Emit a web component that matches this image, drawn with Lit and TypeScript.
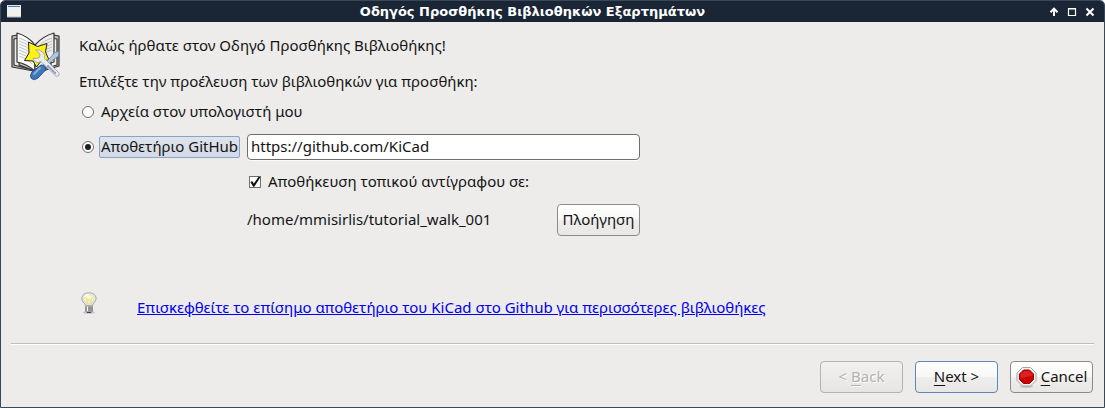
import { LitElement, html, css } from "lit";
import { customElement, state } from "lit/decorators.js";

@customElement("app-root")
export class AppRoot extends LitElement {
  static styles = css`
    :host {
      display: block;
      height: 100vh;
      font: 15px/20px "Noto Sans", "Open Sans", sans-serif;
      color: #141414;
      background: #fff;
    }
    * { box-sizing: border-box; }
    .window {
      display: flex;
      flex-direction: column;
      min-height: 100%;
      border: 1px solid #3b4858;
      border-radius: 5px 5px 0 0;
      background: #edeceb;
      overflow: hidden;
    }
    .titlebar {
      display: grid;
      grid-template-columns: 20px 1fr 60px;
      align-items: center;
      height: 21px;
      padding: 0 6px;
      background: #1a2636;
      color: #fff;
    }
    .titlebar h1 {
      margin: 0;
      font: bold 13px/20px "DejaVu Sans", sans-serif;
      text-align: center;
      white-space: nowrap;
    }
    .titlebar svg { display: block; }
    .controls { display: flex; justify-content: flex-end; gap: 4px; }
    .controls button {
      padding: 0;
      border: 0;
      background: none;
      width: 14px;
      height: 14px;
      color: #fff;
    }
    .page {
      flex: 1;
      display: flex;
      gap: 18px;
      padding: 9px 10px 0;
    }
    .art { flex: none; display: block; }
    .content { flex: 1; min-width: 0; padding-top: 4px; }
    .content p { margin: 0 0 16px; }
    .grid {
      display: grid;
      grid-template-columns: 157px minmax(0, 393px);
      column-gap: 11px;
      margin-top: -5px;
    }
    .row { display: flex; align-items: center; }
    .span { grid-column: 1 / -1; height: 20px; margin-bottom: 12px; }
    .second { grid-column: 2; }
    input[type="radio"], input[type="checkbox"] {
      appearance: none;
      flex: none;
      display: grid;
      place-content: center;
      width: 12px;
      height: 12px;
      background: #fff;
      border: 1px solid #6e6e6b;
    }
    input[type="radio"] { margin: 0 5px 0 3px; border-radius: 50%; }
    input[type="radio"]:checked::before {
      content: "";
      width: 6px;
      height: 6px;
      border-radius: 50%;
      background: #1c2023;
    }
    input[type="checkbox"] { margin: 0 5px 0 2px; }
    input[type="checkbox"]:checked::before {
      content: "";
      width: 12px;
      height: 12px;
      background: #141414;
      clip-path: polygon(12% 50%, 26% 42%, 40% 62%, 82% 4%, 94% 12%, 44% 90%, 34% 90%);
    }
    label {
      padding: 0 1px 2px;
      border: 1px solid transparent;
      border-radius: 2px;
      line-height: 18px;
      white-space: nowrap;
    }
    label.focused { border-color: #86a3c8; background: linear-gradient(#dfe3ea, #d3dae6); }
    .url {
      width: 100%;
      height: 26px;
      padding: 0 3px 2px;
      font: inherit;
      color: inherit;
      background: #fff;
      border: 1px solid #6e6e6b;
      border-radius: 4px;
      box-shadow: 0 1px 0 #fafafa;
      outline: none;
    }
    .copy { height: 22px; margin-top: 11px; }
    .path { justify-content: space-between; margin-top: 11px; }
    .path span { padding-bottom: 2px; }
    .push {
      display: flex;
      align-items: center;
      justify-content: center;
      gap: 4px;
      width: 83px;
      height: 32px;
      padding: 0 0 2px;
      font: inherit;
      color: inherit;
      white-space: nowrap;
      background: linear-gradient(#fff, #f7f7f6 50%, #efeeed 51%, #e8e7e6);
      border: 1px solid #8b8a87;
      border-radius: 4px;
    }
    .push.default { border-color: #5d87b9; }
    .push:disabled {
      color: #b3b1ae;
      text-shadow: 1px 1px 0 #fff;
      border-color: #b4b2af;
      background: linear-gradient(#f2f1f0, #e6e5e4);
    }
    .push svg { margin-top: 2px; }
    .hint { gap: 40px; margin: 56px 0 0 2px; align-items: flex-start; }
    .hint svg { flex: none; }
    .hint a { color: #0000ee; margin-top: 5px; }
    .key { text-decoration: underline; text-underline-offset: 3px; }
    footer {
      display: flex;
      justify-content: flex-end;
      gap: 12px;
      margin: 0 10px;
      padding: 17px 1px 14px 0;
      border-top: 1px solid #bfbebc;
      box-shadow: inset 0 1px 0 #fff;
    }
  `;

  @state() private source = "github";
  @state() private keepCopy = true;

  private wizardArt() {
    return html`<svg class="art" width="50" height="50" viewBox="0 0 50 50" aria-hidden="true">
      <g stroke="#343434" stroke-width="1.2" stroke-linejoin="round">
        <path d="M1 5 L6 4 L24 15 L43 4 L48 5 V35 L28 41 L1 36Z" fill="#b8b8b8"/>
        <path d="M3 8 L8 7 V34 L24 40 L40 34 V7 L46 8 V34 L25 40 L3 34Z" fill="#eee"/>
        <path d="M6 2 Q17 5 24 14 V40 Q16 33 6 31Z" fill="#fafafa"/>
        <path d="M43 2 Q32 5 24 14 V40 Q32 33 43 31Z" fill="#ededed"/>
      </g>
      <g stroke="#b4b4b4" stroke-width=".8" fill="none">
        <path d="M8 7q8 2 13 8M8 10q8 2 13 8M8 13q8 2 13 8M8 16q8 2 13 8M8 19q8 2 13 8M8 22q8 2 13 8M8 25q8 2 13 8M41 7q-8 2 -13 8M41 10q-8 2 -13 8M41 13q-8 2 -13 8M41 16q-8 2 -13 8M41 19q-8 2 -13 8"/>
      </g>
      <path d="M17.500 11 L26.500 15.500 L36 12.500 L34.500 21 L38 29 L30 30 L25.500 36 L22 30 L13.500 29.500 L18 22Z" fill="#fff212" stroke="#222" stroke-width="1" stroke-linejoin="round"/>
      <path d="M43.500 21.500 L48 20.500 L47.500 25 L42 29 L34.500 36 L32.500 34 L39 27Z" fill="#b4c6dd" stroke="#6580a4" stroke-width=".8"/>
      <path d="M22 27 Q22.500 31 26 31.500 Q28 31.800 30 30.500 L43.500 44 Q46 46.500 48 44.500 Q49 42.500 47 41 L33.500 27.500 Q34.500 24 32 21.500 Q29 18 24.500 19 L29 23 L28.500 26.500 L25 27.500Z" fill="#e8ebef" stroke="#9a9da2" stroke-width=".8" stroke-linejoin="round"/>
      <path d="M37 35 L45 43" stroke="#8c96c4" stroke-width="2" stroke-linecap="round" stroke-dasharray="1 2"/>
      <path d="M30 34 Q35 34 34.500 39 L27 47 Q23 50 20.500 47.500 Q18 45 21 41Z" fill="#3f77ba" stroke="#28528d"/>
      <path d="M23 43 L29 37" stroke="#8bb0dc" stroke-width="1.800" stroke-linecap="round"/>
    </svg>`;
  }

  private bulb() {
    return html`<svg width="16" height="23" viewBox="0 0 16 23" aria-hidden="true">
      <ellipse cx="8" cy="20.500" rx="6" ry="1.300" fill="#c5c4c2"/>
      <path d="M4.500 14 Q4.500 12 2 10 Q.5 8 .8 6 Q1.700 .8 8 .7 Q14.300 .8 15.200 6 Q15.400 8 13.500 10 Q11.500 12 11.500 14Z" fill="#e4e4df" stroke="#adada8"/>
      <ellipse cx="8" cy="6.500" rx="4.500" ry="3.200" fill="#fbf8c0"/>
      <path d="M4.500 5 L6 8 H10 L11.500 5 M6 8 V13 M10 8 V13" fill="none" stroke="#e8d96a" stroke-width=".9"/>
      <path d="M3.500 5 Q5 2.500 8 2.500" stroke="#fff" fill="none" stroke-width="1.300"/>
      <rect x="4.500" y="14" width="7" height="6" rx="1" fill="#b7b7b7" stroke="#858585" stroke-width=".8"/>
      <path d="M5 16H11M5 18H11" stroke="#666" stroke-width=".8"/>
      <path d="M6.500 14.500V19" stroke="#fff"/>
      <path d="M6 20.500H10" stroke="#444"/>
    </svg>`;
  }

  private stopSign() {
    return html`<svg width="21" height="21" viewBox="0 0 21 21" aria-hidden="true">
      <ellipse cx="10.500" cy="19.500" rx="7" ry="1.500" fill="#c8c7c5"/>
      <path d="M6.500 .5H14.500L20 6V13.500L14.500 19H6.500L1 13.500V6Z" fill="#f4f4f3" stroke="#a4a4a1"/>
      <path d="M7.500 3H13.500L17.500 7V12.500L13.500 16.500H7.500L3.500 12.500V7Z" fill="#cc0000" stroke="#a80000"/>
      <path d="M8 4H13L16.500 7.500V9L4.500 11V7.500Z" fill="#dd2020"/>
    </svg>`;
  }

  render() {
    return html`<div class="window">
      <header class="titlebar">
        <svg width="14" height="13" viewBox="0 0 14 13" aria-hidden="true">
          <rect width="14" height="12" fill="#f1f1ef"/>
          <path d="M0 .5H14" stroke="#dfe8f2"/><path d="M1 1.500H13" stroke="#4a7fc0"/>
          <path d="M0 12H14" stroke="#b8b8b4"/>
        </svg>
        <h1>Οδηγός Προσθήκης Βιβλιοθηκών Εξαρτημάτων</h1>
        <div class="controls">
          <button aria-label="Shade"><svg width="14" height="14" viewBox="0 0 14 14"><path d="M6 11V5M2.500 7.200L6 3.700L9.500 7.200" fill="none" stroke="currentColor" stroke-width="2"/></svg></button>
          <button aria-label="Maximize"><svg width="14" height="14" viewBox="0 0 14 14"><path d="M2.500 3.500H9.500V10.500H2.500Z M2 4H10" fill="none" stroke="currentColor" stroke-width="1.200"/></svg></button>
          <button aria-label="Close"><svg width="14" height="14" viewBox="0 0 14 14"><path d="M2.500 3.500L9.500 10.500M9.500 3.500L2.500 10.500" stroke="currentColor" stroke-width="2"/></svg></button>
        </div>
      </header>

      <main class="page">
        ${this.wizardArt()}
        <div class="content">
          <p>Καλώς ήρθατε στον Οδηγό Προσθήκης Βιβλιοθήκης!</p>
          <p>Επιλέξτε την προέλευση των βιβλιοθηκών για προσθήκη:</p>
          <div class="grid">
            <div class="row span">
              <input type="radio" id="local" name="source" .checked=${this.source === "local"} @change=${() => (this.source = "local")}>
              <label for="local">Αρχεία στον υπολογιστή μου</label>
            </div>
            <div class="row">
              <input type="radio" id="github" name="source" .checked=${this.source === "github"} @change=${() => (this.source = "github")}>
              <label class="focused" id="github-label" for="github">Αποθετήριο GitHub</label>
            </div>
            <input class="url" type="text" aria-labelledby="github-label" .value=${"https://github.com/KiCad"}>
            <div class="row second copy">
              <input type="checkbox" id="copy" .checked=${this.keepCopy} @change=${() => (this.keepCopy = !this.keepCopy)}>
              <label for="copy">Αποθήκευση τοπικού αντίγραφου σε:</label>
            </div>
            <div class="row second path">
              <span>/home/mmisirlis/tutorial_walk_001</span>
              <button class="push">Πλοήγηση</button>
            </div>
          </div>
          <div class="row hint">
            ${this.bulb()}
            <a href="https://github.com/KiCad">Επισκεφθείτε το επίσημο αποθετήριο του KiCad στο Github για περισσότερες βιβλιοθήκες</a>
          </div>
        </div>
      </main>

      <footer>
        <button class="push" disabled><span>&lt; <span class="key">B</span>ack</span></button>
        <button class="push default"><span><span class="key">N</span>ext &gt;</span></button>
        <button class="push">${this.stopSign()}<span><span class="key">C</span>ancel</span></button>
      </footer>
    </div>`;
  }
}
